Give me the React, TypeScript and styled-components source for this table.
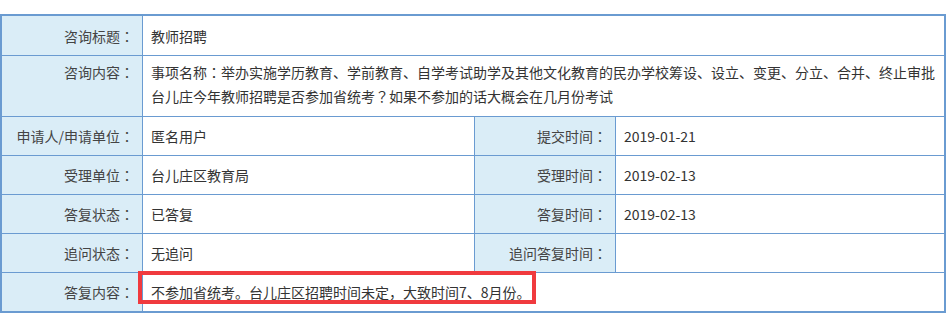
import React from "react"
import styled, { createGlobalStyle } from "styled-components"

const GlobalStyle = createGlobalStyle`
  body {
    margin: 0;
    background: #fff;
    font-family: "Noto Sans CJK SC", "Liberation Sans", sans-serif;
  }
`

const line = "#6a9bd1"

const Sheet = styled.div`
  margin-top: 14px;
  width: 946px;
  box-sizing: border-box;
  display: grid;
  grid-template-columns: 140px 331px 140px 328px;
  grid-template-rows: 39px 60px 38px 38px 38px 38px 38px;
  gap: 1px;
  background: ${line};
  border: 2px solid ${line};
  font-size: 14px;
  color: #333;
`

// full-width marks drawn centred in their box, as the source font does
const Punct = styled.span`
  font-family: "Noto Sans CJK JP", "Noto Sans CJK SC", sans-serif;
`

const Cell = styled.div<{ $multi?: boolean }>`
  display: flex;
  align-items: ${(p) => (p.$multi ? "flex-start" : "center")};
  padding: ${(p) => (p.$multi ? "4px 8px 0" : "0 8px")};
  line-height: 24px;
  white-space: nowrap;
`

const Label = styled(Cell)`
  justify-content: flex-end;
  background: #daedf7;
  color: #444;
  padding-right: 8px;
`

const Value = styled(Cell)<{ $wide?: boolean }>`
  position: relative;
  background: #fff;
  grid-column: ${(p) => (p.$wide ? "span 3" : "auto")};
  display: ${(p) => (p.$multi ? "block" : "flex")};
`

const Mark = styled.div`
  position: absolute;
  left: -5px;
  top: -2px;
  width: 398px;
  height: 33px;
  box-sizing: border-box;
  border: 4px solid #f03a3e;
  pointer-events: none;
`

type Row = {
  label: string
  value?: React.ReactNode
  label2?: string
  value2?: string
  multi?: boolean
  marked?: boolean
}

const rows: Row[] = [
  { label: "咨询标题：", value: "教师招聘" },
  {
    label: "咨询内容：",
    value: (
      <>
        事项名称<Punct>：</Punct>举办实施学历教育、学前教育、自学考试助学及其他文化教育的民办学校筹设、设立、变更、分立、合并、终止审批
        <br />
        台儿庄今年教师招聘是否参加省统考<Punct>？</Punct>如果不参加的话大概会在几月份考试
      </>
    ),
    multi: true,
  },
  { label: "申请人/申请单位：", value: "匿名用户", label2: "提交时间：", value2: "2019-01-21" },
  { label: "受理单位：", value: "台儿庄区教育局", label2: "受理时间：", value2: "2019-02-13" },
  { label: "答复状态：", value: "已答复", label2: "答复时间：", value2: "2019-02-13" },
  { label: "追问状态：", value: "无追问", label2: "追问答复时间：", value2: "" },
  { label: "答复内容：", value: "不参加省统考。台儿庄区招聘时间未定，大致时间7、8月份。", marked: true },
]

const withColon = (text: string) => (
  <>
    {text.slice(0, -1)}
    <Punct>：</Punct>
  </>
)

const Info = () => (
  <Sheet>
    {rows.map((r, i) => (
      <React.Fragment key={i}>
        <Label $multi={r.multi}>{withColon(r.label)}</Label>
        {r.label2 !== undefined ? (
          <>
            <Value>{r.value}</Value>
            <Label>{withColon(r.label2)}</Label>
            <Value>{r.value2}</Value>
          </>
        ) : (
          <Value $wide $multi={r.multi}>
            {r.value}
            {r.marked && <Mark />}
          </Value>
        )}
      </React.Fragment>
    ))}
  </Sheet>
)

export default function App() {
  return (
    <>
      <GlobalStyle />
      <Info />
    </>
  )
}
